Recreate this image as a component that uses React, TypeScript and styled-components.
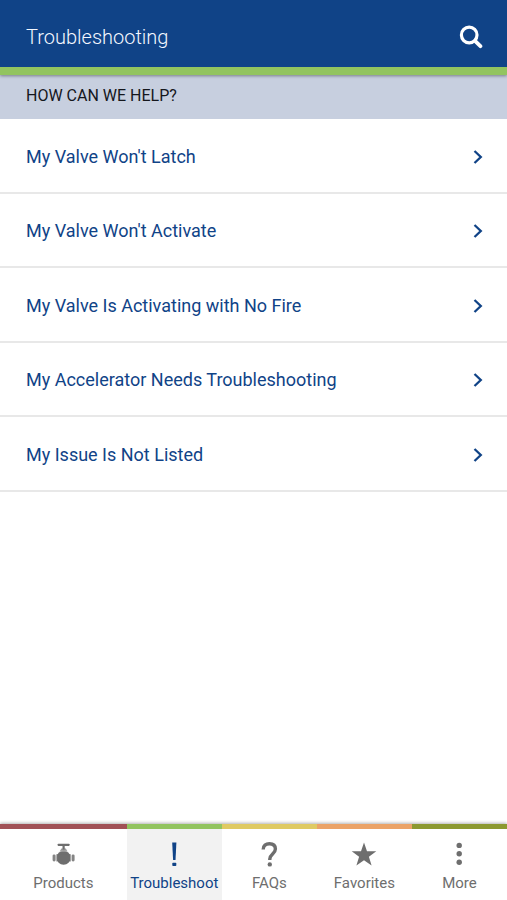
import React from "react";
import styled, { createGlobalStyle } from "styled-components";

const GlobalStyle = createGlobalStyle`
  * { box-sizing: border-box; }
  body {
    margin: 0;
    background: #fff;
    font-family: Roboto, "Liberation Sans", sans-serif;
  }
`;

const Screen = styled.div`
  display: flex;
  flex-direction: column;
  min-height: 100vh;
`;

const Header = styled.header`
  display: flex;
  align-items: center;
  justify-content: space-between;
  height: 75px;
  padding: 0 24px 0 26px;
  color: #fff;
  background: #104387;
  border-bottom: 8px solid #92c45f;
  box-shadow: 0 1px 3px rgba(0, 0, 0, 0.4);
  z-index: 1;
`;

const Title = styled.h1`
  margin: 0;
  padding-top: 6px;
  font-size: 20px;
  line-height: 28px;
  font-weight: 300;
  color: #f4f8ff;
`;

const SearchButton = styled.button`
  display: flex;
  margin: 0;
  padding: 7px 0 0;
  border: 0;
  color: inherit;
  background: none;
  cursor: pointer;
`;

const SectionTitle = styled.h2`
  margin: 0;
  padding: 9px 26px 11px;
  font-size: 16px;
  line-height: 24px;
  font-weight: 400;
  color: #14161c;
  background: #c7cfdf;
`;

const IssueList = styled.ul`
  display: grid;
  grid-auto-rows: 75px 74px;
  margin: 0;
  padding: 0;
  list-style: none;
`;

const IssueItem = styled.li`
  display: flex;
  border-bottom: 2px solid #e8e8e8;
`;

const IssueLink = styled.a`
  display: flex;
  flex: 1;
  align-items: center;
  justify-content: space-between;
  padding: 2px 24px 0 26px;
  font-size: 18px;
  line-height: 24px;
  color: #104387;
  text-decoration: none;
`;

const TabBar = styled.nav`
  display: flex;
  margin-top: auto;
  background: #fff;
  box-shadow: 0 -1px 3px rgba(0, 0, 0, 0.3);
`;

const Tab = styled.button<{ $accent: string; $active?: boolean; $grow: number }>`
  display: flex;
  flex: ${(p) => p.$grow} 1 0;
  flex-direction: column;
  align-items: center;
  gap: 4px;
  min-width: 0;
  margin: 0;
  padding: 12px 0 7px;
  border: 0;
  border-top: 5px solid ${(p) => p.$accent};
  font-family: inherit;
  font-size: 15px;
  line-height: 20px;
  color: ${(p) => (p.$active ? "#104387" : "#6e6e6e")};
  background: ${(p) => (p.$active ? "#f2f2f2" : "#fff")};
  cursor: pointer;
`;

const SearchIcon = () => (
  <svg width="24" height="24" viewBox="0 0 24 24" fill="none" stroke="currentColor" aria-hidden="true">
    <circle cx="10.2" cy="10" r="7.8" strokeWidth="3.2" />
    <path d="M16 15.8 21.4 21.2" strokeWidth="3.8" strokeLinecap="round" />
  </svg>
);

const Chevron = () => (
  <svg width="10" height="14" viewBox="0 0 10 14" fill="none" stroke="currentColor" strokeWidth="2.3" aria-hidden="true">
    <path d="M1.5 1 7.8 7 1.5 13" />
  </svg>
);

const TabIcon = ({ children }: { children: React.ReactNode }) => (
  <svg width="28" height="28" viewBox="0 0 28 28" fill="currentColor" aria-hidden="true">
    {children}
  </svg>
);

const ValveIcon = () => (
  <TabIcon>
    <rect x="8.7" y="2.7" width="11.8" height="2.2" rx="0.6" />
    <rect x="13.5" y="4.5" width="2.2" height="4" />
    <path d="M10.6 10.4 12.4 7.4h4.4l1.8 3z" opacity="0.7" />
    <circle cx="14.6" cy="16.7" r="7" />
    <rect x="7.2" y="13.2" width="14.8" height="7.2" />
    <rect x="3.6" y="13.4" width="3" height="7" rx="1.4" opacity="0.85" />
    <rect x="22.6" y="13.4" width="3" height="7" rx="1.4" opacity="0.85" />
    <path d="M7.6 12.8v7.8M21.6 12.8v7.8M10.4 10.2h8.4" stroke="#fff" strokeWidth="0.6" opacity="0.7" />
  </TabIcon>
);

const ExclamationIcon = () => (
  <TabIcon>
    <path d="M12.2 1.5h4.2l-.9 17.5h-2.4z" />
    <rect x="12.3" y="21.8" width="4" height="3.2" rx="0.7" />
  </TabIcon>
);

const QuestionIcon = () => (
  <TabIcon>
    <path
      d="M8.2 8.4C8.2 4.6 10.9 2.7 14.4 2.7c3.7 0 6 2 6 5.3 0 4.9-5.6 5-5.6 10v1"
      fill="none"
      stroke="currentColor"
      strokeWidth="3.4"
    />
    <circle cx="14.8" cy="23.4" r="2.2" />
  </TabIcon>
);

const StarIcon = () => (
  <TabIcon>
    <path d="M14 1.4 17 10.2h9.3L18.9 15.7 21.6 24.6 14 19.2 6.4 24.6 9.1 15.7 1.7 10.2H11z" />
  </TabIcon>
);

const MoreIcon = () => (
  <TabIcon>
    <circle cx="14.2" cy="4.4" r="2.7" />
    <circle cx="14.2" cy="12.8" r="2.7" />
    <circle cx="14.2" cy="21.3" r="2.7" />
  </TabIcon>
);

const issues = [
  "My Valve Won't Latch",
  "My Valve Won't Activate",
  "My Valve Is Activating with No Fire",
  "My Accelerator Needs Troubleshooting",
  "My Issue Is Not Listed",
];

const tabs = [
  { label: "Products", accent: "#a15156", Icon: ValveIcon, grow: 4 },
  { label: "Troubleshoot", accent: "#92c45f", Icon: ExclamationIcon, grow: 3, active: true },
  { label: "FAQs", accent: "#dfca62", Icon: QuestionIcon, grow: 3 },
  { label: "Favorites", accent: "#eba367", Icon: StarIcon, grow: 3 },
  { label: "More", accent: "#8c9930", Icon: MoreIcon, grow: 3 },
];

export default function App() {
  return (
    <>
      <GlobalStyle />
      <Screen>
        <Header>
          <Title>Troubleshooting</Title>
          <SearchButton type="button" aria-label="Search">
            <SearchIcon />
          </SearchButton>
        </Header>
        <main>
          <SectionTitle>HOW CAN WE HELP?</SectionTitle>
          <IssueList>
            {issues.map((issue) => (
              <IssueItem key={issue}>
                <IssueLink href="#">
                  {issue}
                  <Chevron />
                </IssueLink>
              </IssueItem>
            ))}
          </IssueList>
        </main>
        <TabBar>
          {tabs.map(({ label, accent, Icon, grow, active }) => (
            <Tab
              key={label}
              type="button"
              $accent={accent}
              $active={active}
              $grow={grow}
              aria-current={active ? "page" : undefined}
            >
              <Icon />
              {label}
            </Tab>
          ))}
        </TabBar>
      </Screen>
    </>
  );
}
